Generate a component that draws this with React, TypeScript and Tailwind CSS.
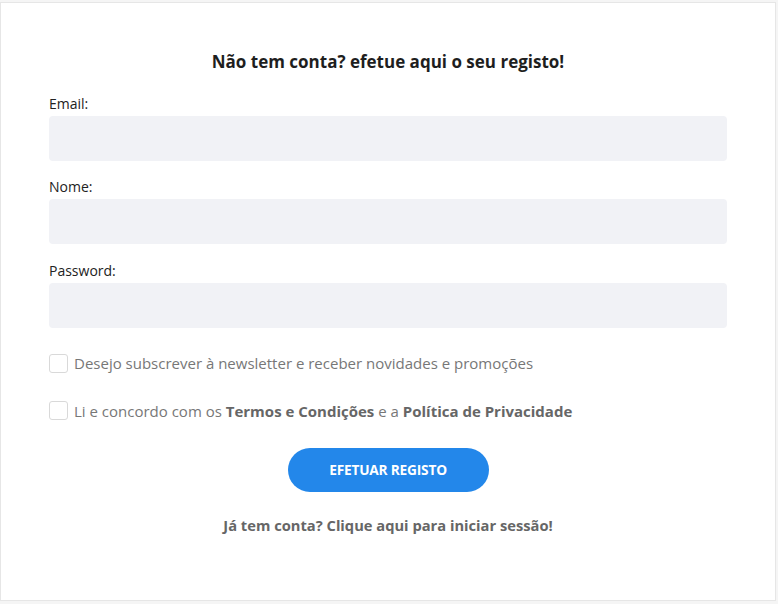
const font = { fontFamily: '"Open Sans", "Noto Sans", sans-serif' };

const Field = ({ label, top }: { label: string; top: string }) => (
  <div className={`flex flex-col ${top}`}>
    <label className="text-[14px] leading-[20px] text-[#222]">{label}</label>
    <input className="mt-[2px] h-[45px] w-full rounded-[4px] bg-[#f1f2f6] outline-none" />
  </div>
);

const Check = ({ children, top }: { children: React.ReactNode; top: string }) => (
  <label className={`flex items-center gap-[6px] ${top}`}>
    <span className="h-[19px] w-[19px] rounded-[3px] border border-[#d9d9d9] bg-white"></span>
    <span className="text-[15px] text-[#777]">{children}</span>
  </label>
);

export default function App() {
  return (
    <div className="h-[604px] w-[778px] bg-[#f5f5f5] pt-[2px]" style={font}>
      <div className="h-[599px] w-[776px] border border-[#e6e6e6] bg-white px-[48px] pt-[48px]">
        <h2 className="text-center text-[17px] font-bold leading-[22px] text-[#1e1e1e]">
          Não tem conta? efetue aqui o seu registo!
        </h2>
        <Field label="Email:" top="mt-[21px]" />
        <Field label="Nome:" top="mt-[16px]" />
        <Field label="Password:" top="mt-[17px]" />
        <Check top="mt-[24px]">Desejo subscrever à newsletter e receber novidades e promoções</Check>
        <Check top="mt-[25px]">
          Li e concordo com os <b className="text-[#666]">Termos e Condições</b> e a{" "}
          <b className="text-[#666]">Política de Privacidade</b>
        </Check>
        <div className="mt-[26px] flex justify-center">
          <button className="h-[44px] w-[201px] rounded-full bg-[#2387ea] text-[13.7px] font-bold uppercase tracking-[-0.2px] text-white">
            Efetuar registo
          </button>
        </div>
        <p className="mt-[22px] text-center text-[14.7px] font-bold text-[#666]">
          Já tem conta? Clique aqui para iniciar sessão!
        </p>
      </div>
    </div>
  );
}
